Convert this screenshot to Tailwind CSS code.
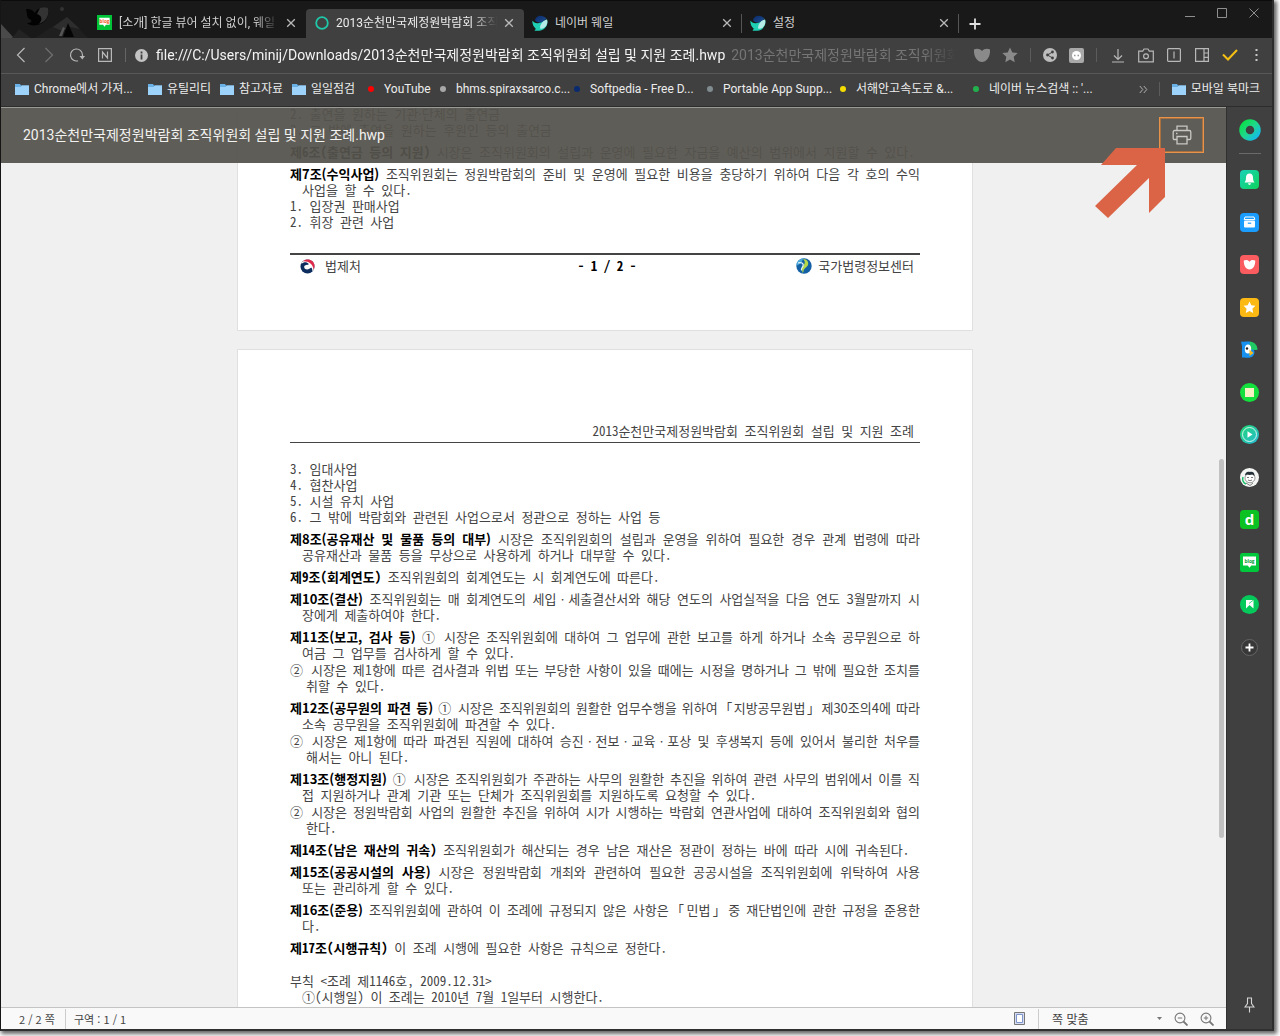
<!DOCTYPE html>
<html lang="ko">
<head>
<meta charset="utf-8">
<meta name="viewport" content="width=device-width, initial-scale=1">
<title>2013순천만국제정원박람회 조직위원회 설립 및 지원 조례.hwp</title>
<script src="https://cdn.jsdelivr.net/npm/@tailwindcss/browser@4"></script>
</head>
<body class="h-screen overflow-hidden bg-white pr-[6px] pb-[5px] font-['Roboto','Noto_Sans_CJK_KR',sans-serif]">
<svg class="absolute size-0">
  <defs>
    <linearGradient id="whaleTop" x1="0" y1="0" x2="1" y2="1"><stop offset="0" stop-color="#0b2a6b"/><stop offset="1" stop-color="#1d4f8e"/></linearGradient>
    <linearGradient id="ringGrad" x1="0" y1="0" x2="1" y2="1"><stop offset="0" stop-color="#0be04a"/><stop offset=".5" stop-color="#1fd88c"/><stop offset="1" stop-color="#14b9ee"/></linearGradient>
    <linearGradient id="bellGrad" x1="0" y1="0" x2="1" y2="1"><stop offset="0" stop-color="#18d0b8"/><stop offset="1" stop-color="#10d45c"/></linearGradient>
    <linearGradient id="playGrad" x1="0" y1="0" x2="1" y2="1"><stop offset="0" stop-color="#20d870"/><stop offset="1" stop-color="#28b8d8"/></linearGradient>
    <symbol id="folder" viewBox="0 0 14 12"><path d="M0 1h5l1 1.500h8V12H0z" fill="#69b1e6"/><path d="M0 4h5.500L7 2.500h7V12H0z" fill="#9dd2fa"/></symbol>
    <symbol id="close" viewBox="0 0 10 10"><path d="M1.200 1.200l7.600 7.600M8.800 1.200L1.200 8.800" stroke="#b9b9b9" stroke-width="1.300" fill="none"/></symbol>
    <symbol id="whale" viewBox="0 0 16 16"><path d="M.5 5.500C2 8 4 8.500 7 8l8-3.500c1.500 5-1.500 11-8 11.300H2.500l1.300-2C1.500 12 0 9 .5 5.500z" fill="#1fd0b4"/><path d="M3 5C4 .5 10-1 14.500 3.500 13.500 5 10 8 7.500 7.600 5 7.500 3.500 6.500 3 5z" fill="url(#whaleTop)"/><path d="M8 13.500c0-4.500 3-8 7-9 1.500 5-2 10-7 9z" fill="#b5ebe6"/></symbol>
    <symbol id="blog" viewBox="0 0 16 16"><path d="M2.500 3h11v7.500h-4L8 12.500l-1.500-2h-4z" fill="#fff"/></symbol>
  </defs>
</svg>

<div class="flex h-full flex-col border-l border-[#151515] border-r-2 border-b-2 border-b-[#303030] border-r-[#2c2c2c] bg-[#404040] shadow-[2px_2px_4px_1px_rgba(0,0,0,0.6)]">

  <!-- Tab strip -->
  <header class="flex h-[38px] shrink-0 border-t border-[#0c0c0c] bg-[#191919]">
    <svg class="h-[37px] w-[87px] shrink-0" viewBox="0 0 87 37">
      <path d="M0 23l13 14H0z" fill="#4a4a4a"/><path d="M11 37l7-9 8 6 4 3z" fill="#232323"/><path d="M34 37l32-21 21 21z" fill="#1f1f1f"/><path d="M52 26l14-10 13 12-10-2-8 4z" fill="#2d2d2d"/><path d="M62 36l5-14 6 14z" fill="#050505"/><path d="M58 35l4-9 2 1-3 8z" fill="#555"/>
      <path d="M25 8c6 0 7 2 9 4 2-5 7-6 13-5 2 8-3 16-11 17-4 1-8 0-10-2 4 0 5-1 4-3-3-1-4-3-4-6z" fill="#030303"/><path d="M39 7c3-1 6-1 8 0 2 8-3 14-9 16 4-5 3-8-2-10z" fill="#333"/><circle cx="61" cy="8" r="2" fill="#333"/>
    </svg>
    <nav class="flex min-w-0 shrink" aria-label="탭">
      <div class="flex w-[218px] items-center gap-[7px] pr-[10px] pl-[9px] pt-[6px]">
        <svg class="size-[15px] shrink-0 bg-[#00c437]" viewBox="0 0 16 16"><use href="#blog"/><text x="8" y="8.500" text-anchor="middle" font-size="5" font-weight="bold" font-family="Open Sans" fill="#f16023">blog</text></svg>
        <a href="#" class="flex-1 overflow-hidden text-[12px] leading-4 whitespace-nowrap text-[#d0d0d0] [mask-image:linear-gradient(to_right,black_85%,transparent)]">[소개] 한글 뷰어 설치 없이, 웨일</a>
        <button aria-label="탭 닫기"><svg class="size-[10px]"><use href="#close"/></svg></button>
      </div>
      <div class="mt-2 flex w-[218px] items-center gap-[7px] rounded-t-sm bg-[#404040] pr-[10px] pl-[9px] pb-[2px]">
        <svg class="size-[14px] shrink-0" viewBox="0 0 14 14"><circle cx="7" cy="7" r="5.800" fill="none" stroke="#1fc8a9" stroke-width="1.800"/></svg>
        <a href="#" class="flex-1 overflow-hidden text-[12px] leading-4 whitespace-nowrap text-[#ececec] [mask-image:linear-gradient(to_right,black_85%,transparent)]">2013순천만국제정원박람회 조직</a>
        <button aria-label="탭 닫기"><svg class="size-[10px]"><use href="#close"/></svg></button>
      </div>
      <div class="flex w-[217px] items-center gap-[7px] pr-[9px] pl-2 pt-[6px]">
        <svg class="size-4 shrink-0"><use href="#whale"/></svg>
        <a href="#" class="flex-1 text-[12px] leading-4 text-[#d0d0d0]">네이버 웨일</a>
        <button aria-label="탭 닫기"><svg class="size-[10px]"><use href="#close"/></svg></button>
      </div>
      <div class="mt-[13px] mb-[5px] flex w-[218px] items-center gap-[7px] border-x border-[#555] pr-[9px] pl-2 pb-[2px]">
        <svg class="size-4 shrink-0"><use href="#whale"/></svg>
        <a href="#" class="flex-1 text-[12px] leading-4 text-[#d0d0d0]">설정</a>
        <button aria-label="탭 닫기"><svg class="size-[10px]"><use href="#close"/></svg></button>
      </div>
      <button class="flex w-8 items-center justify-center pt-[9px]" aria-label="새 탭"><svg class="size-3" viewBox="0 0 12 12"><path d="M6 .5v11M.5 6h11" stroke="#e0e0e0" stroke-width="1.800"/></svg></button>
    </nav>
    <div class="ml-auto flex items-start gap-[22px] pt-[7px] pr-[13px] text-[#8f8f8f]">
      <button aria-label="최소화"><svg class="size-[10px]" viewBox="0 0 10 10"><path d="M0 8.500h10" stroke="currentColor"/></svg></button>
      <button aria-label="최대화"><svg class="size-[10px]" viewBox="0 0 10 10"><path d="M.5.5h9v9h-9z" fill="none" stroke="currentColor"/></svg></button>
      <button aria-label="닫기"><svg class="size-[10px]" viewBox="0 0 10 10"><path d="M.5.5l9 9M9.500.5l-9 9" stroke="currentColor"/></svg></button>
    </div>
  </header>

  <!-- Address bar -->
  <div class="flex h-9 shrink-0 items-center border-b border-[#585858] pb-px pl-[6px] text-[#b8b8b8]">
    <button class="flex w-7 justify-center" aria-label="뒤로"><svg class="h-4 w-3" viewBox="0 0 12 16"><path d="M9.500 1L2.500 8l7 7" fill="none" stroke="currentColor" stroke-width="1.200"/></svg></button>
    <button class="flex w-7 justify-center text-[#707070]" aria-label="앞으로"><svg class="h-4 w-3" viewBox="0 0 12 16"><path d="M2.500 1l7 7-7 7" fill="none" stroke="currentColor" stroke-width="1.200"/></svg></button>
    <button class="flex w-7 justify-center" aria-label="새로고침"><svg class="size-4" viewBox="0 0 16 16"><path d="M9 13.800A6 6 0 1 1 13.500 8v2" fill="none" stroke="currentColor" stroke-width="1.200"/><path d="M10.500 9h5.500l-2.700 3.500z" fill="currentColor"/></svg></button>
    <button class="flex w-7 justify-center" aria-label="네이버"><svg class="size-[14px]" viewBox="0 0 14 14"><path d="M.6.6h12.800v12.800H.6zM4.500 10.500V4l5 6V3.500" fill="none" stroke="currentColor" stroke-width="1.200"/></svg></button>
    <span class="mx-[6px] h-[14px] w-px bg-[#666]"></span>
    <svg class="mx-[3px] size-[13px] shrink-0" viewBox="0 0 13 13"><circle cx="6.500" cy="6.500" r="6.500" fill="#c4c4c4"/><path d="M6.500 2.600v1.900M6.500 5.500v5" stroke="#404040" stroke-width="1.800"/></svg>
    <div class="ml-[5px] flex min-w-0 flex-1 gap-[6px] overflow-hidden whitespace-nowrap text-[14px] leading-5 [mask-image:linear-gradient(to_right,black_96%,transparent)]">
      <span class="text-[#f4f4f4]">file:///C:/Users/minij/Downloads/2013순천만국제정원박람회 조직위원회 설립 및 지원 조례.hwp</span>
      <span class="text-[#757575]">2013순천만국제정원박람회 조직위원회 설</span>
    </div>
    <div class="flex shrink-0 items-center pr-1 pl-3">
      <button class="flex w-7 justify-center" aria-label="관심"><svg class="h-[14px] w-4" viewBox="0 0 16 14"><path d="M0 1.500C3 0 6 .8 8 3c2-2.200 5-3 8-1.500C16.500 8 13 14 8 14S-.5 8 0 1.500z" fill="#8a8a8a"/></svg></button>
      <button class="flex w-7 justify-center" aria-label="북마크"><svg class="size-4" viewBox="0 0 16 16"><path d="M8 .5l2.300 4.900 5.400.7-4 3.700 1 5.400L8 12.600l-4.700 2.600 1-5.400-4-3.700 5.400-.7z" fill="#8a8a8a"/></svg></button>
      <span class="mx-[6px] h-[14px] w-px bg-[#5c5c5c]"></span>
      <button class="flex w-[26px] justify-center" aria-label="공유"><svg class="size-[14px]" viewBox="0 0 14 14"><circle cx="7" cy="7" r="7" fill="#bdbdbd"/><path d="M9.500 4L4.500 7l5 3" fill="none" stroke="#404040"/><g fill="#404040"><circle cx="9.500" cy="4" r="1.400"/><circle cx="4.500" cy="7" r="1.400"/><circle cx="9.500" cy="10" r="1.400"/></g></svg></button>
      <button class="flex w-[26px] justify-center" aria-label="확장"><svg class="size-[15px]" viewBox="0 0 15 15"><rect width="15" height="15" rx="2" fill="#a9a9a9"/><circle cx="7.500" cy="7.500" r="4.500" fill="#fff"/><path d="M5 7.500h1.500M8.500 7.500H10" stroke="#999" stroke-width="1.500"/></svg></button>
      <span class="mx-[7px] h-[14px] w-px bg-[#5c5c5c]"></span>
      <button class="flex w-7 justify-center" aria-label="다운로드"><svg class="h-[15px] w-[14px]" viewBox="0 0 14 15"><path d="M7 1v10M3 7.500L7 11.500l4-4M1 14h12" fill="none" stroke="currentColor" stroke-width="1.200"/></svg></button>
      <button class="flex w-7 justify-center" aria-label="캡처"><svg class="h-[15px] w-4" viewBox="0 0 16 15"><path d="M.7 3.200h4L6 1h4l1.300 2.200h4v10.600H.7z" fill="none" stroke="currentColor" stroke-width="1.200"/><circle cx="8" cy="8.200" r="2.400" fill="none" stroke="currentColor" stroke-width="1.200"/></svg></button>
      <button class="flex w-7 justify-center" aria-label="새 창"><svg class="size-[14px]" viewBox="0 0 14 14"><rect x=".6" y=".6" width="12.800" height="12.800" rx="1" fill="none" stroke="currentColor" stroke-width="1.200"/><path d="M7 3.500v7" stroke="currentColor" stroke-width="1.200"/></svg></button>
      <button class="flex w-7 justify-center" aria-label="사이드바"><svg class="size-[14px]" viewBox="0 0 14 14"><path d="M.6.600h12.800v12.800H.6zM9 .6v12.800M9 5h4.400M9 9.300h4.400" fill="none" stroke="currentColor" stroke-width="1.200"/></svg></button>
      <button class="flex w-7 justify-center" aria-label="업데이트"><svg class="h-3 w-4" viewBox="0 0 16 12"><path d="M1 5.500l5 5 9-9.500" fill="none" stroke="#f5bf14" stroke-width="2"/></svg></button>
      <button class="flex w-6 justify-center" aria-label="메뉴"><svg class="h-3 w-[3px]" viewBox="0 0 3 12" fill="#c8c8c8"><rect x=".5" width="2" height="2"/><rect x=".5" y="5" width="2" height="2"/><rect x=".5" y="10" width="2" height="2"/></svg></button>
    </div>
  </div>

  <!-- Bookmarks bar -->
  <nav class="flex h-8 shrink-0 items-center pb-[2px] pl-[14px] text-[12px] leading-4 whitespace-nowrap text-[#ececec]" aria-label="북마크">
    <a href="#" class="flex w-[133px] items-center gap-[5px]"><svg class="h-3 w-[14px] shrink-0"><use href="#folder"/></svg>Chrome에서 가져...</a>
    <a href="#" class="flex w-[72px] items-center gap-[5px]"><svg class="h-3 w-[14px] shrink-0"><use href="#folder"/></svg>유틸리티</a>
    <a href="#" class="flex w-[72px] items-center gap-[5px]"><svg class="h-3 w-[14px] shrink-0"><use href="#folder"/></svg>참고자료</a>
    <a href="#" class="flex w-[72px] items-center gap-[5px]"><svg class="h-3 w-[14px] shrink-0"><use href="#folder"/></svg>일일점검</a>
    <a href="#" class="flex w-[72px] items-center gap-[10px] pl-1"><i class="size-[6px] shrink-0 rounded-full bg-[#f00]"></i>YouTube</a>
    <a href="#" class="flex w-[134px] items-center gap-[10px] pl-1"><i class="size-[6px] shrink-0 rounded-full bg-[#a8a8a8]"></i>bhms.spiraxsarco.c...</a>
    <a href="#" class="flex w-[133px] items-center gap-[10px] pl-1"><i class="size-[6px] shrink-0 rounded-full bg-[#0a2a70]"></i>Softpedia - Free D...</a>
    <a href="#" class="flex w-[133px] items-center gap-[10px] pl-1"><i class="size-[6px] shrink-0 rounded-full bg-[#808c90]"></i>Portable App Supp...</a>
    <a href="#" class="flex w-[133px] items-center gap-[10px] pl-1"><i class="size-[6px] shrink-0 rounded-full bg-[#f5dc00]"></i>서해안고속도로 &amp;...</a>
    <a href="#" class="flex w-[133px] items-center gap-[10px] pl-1"><i class="size-[6px] shrink-0 rounded-full bg-[#22b14c]"></i>네이버 뉴스검색 :: '...</a>
    <div class="ml-auto flex items-center pr-3">
      <button aria-label="더 보기"><svg class="size-[9px]" viewBox="0 0 9 9"><path d="M.8 1l3 3.500-3 3.500M4.800 1l3 3.500-3 3.500" fill="none" stroke="#b0b0b0"/></svg></button>
      <span class="mr-3 ml-[11px] h-[14px] w-px bg-[#5c5c5c]"></span>
      <a href="#" class="flex items-center gap-[5px]"><svg class="h-3 w-[14px]"><use href="#folder"/></svg>모바일 북마크</a>
    </div>
  </nav>

  <div class="flex min-h-0 flex-1 border-t border-[#2c2c2c]">
    <!-- Document viewer -->
    <div class="flex min-w-0 flex-1 flex-col">
      <main class="relative min-h-0 flex-1 overflow-hidden border-t border-[#9a9a96] bg-[#f0f0f0] pr-[17px] font-['Noto_Sans_Mono_CJK_KR','Noto_Sans_CJK_KR',sans-serif] text-[13px] leading-4 text-[#444]">
        <section class="mx-auto -mt-[2px] h-[225px] w-[736px] border-x border-b border-[#e0e0e0] bg-white px-[52px]">
          <p>2. 출연을 원하는 기관·단체의 출연금</p>
          <p>3. 그 밖에 출연을 원하는 후원인 등의 출연금</p>
          <p class="mt-[6px]"><b class="font-bold text-black">제6조(출연금 등의 지원)</b> 시장은 조직위원회의 설립과 운영에 필요한 자금을 예산의 범위에서 지원할 수 있다.</p>
          <p class="mt-[6px]"><span class="block font-['Noto_Sans_CJK_KR',sans-serif] [text-align-last:justify]"><b class="font-bold text-black">제7조(수익사업)</b> 조직위원회는 정원박람회의 준비 및 운영에 필요한 비용을 충당하기 위하여 다음 각 호의 수익</span><span class="block pl-3">사업을 할 수 있다.</span></p>
          <p>1. 입장권 판매사업</p>
          <p>2. 휘장 관련 사업</p>
          <footer class="mt-[23px] flex items-center justify-between border-t-2 border-[#444] pt-[3px] pr-[6px] pl-[10px]">
            <span class="flex w-[120px] items-center gap-[10px]"><svg class="size-[15px]" viewBox="0 0 16 16"><circle cx="8" cy="8" r="7.500" fill="#0d2d5e"/><path d="M2 3.500C5-.5 13-.5 15 6c.8 3-.5 6-2 7.500.5-2 0-3.500-1-4.500L10 10.500C7 12 4 10.500 4.500 8 5 6 8 6.500 9.500 5.500 7 2.500 4 3 1.500 5z" fill="#fff"/><path d="M3 2.500C7-1 14 .5 15.300 6c.4 2 0 4-1 5.500C14.500 6 9 2 3 2.500z" fill="#e0284a"/></svg>법제처</span>
            <b class="font-bold text-black">- 1 / 2 -</b>
            <span class="flex w-[120px] items-center justify-end gap-[6px] whitespace-nowrap"><svg class="size-4 shrink-0" viewBox="0 0 16 16"><circle cx="8" cy="8" r="7.700" fill="#1460a4"/><path d="M8 .3C3 .5.3 4 .4 8c2-2 4-1.500 5-3.500C6.500 3 6 2 8 .3z" fill="#4aa8d8"/><path d="M7 1c4 0 6 3 5 6-1 2.500-4 3-4.500 6 0 1-.5 1.500-1 2 0-4-1.500-5 1-7.500C9.500 5 9 3 7 1z" fill="#b4d84a"/><path d="M2 5c3-1 6 0 5 3-.5 1.500-2 2-1.500 4.500" fill="none" stroke="#e8f4fa" stroke-width="1.200"/></svg>국가법령정보센터</span>
          </footer>
        </section>

        <section class="mx-auto mt-[18px] w-[736px] border border-[#e0e0e0] bg-white px-[52px] pt-[73px] pb-[60px]">
          <h2 class="mb-[18px] border-b border-[#444] pr-[6px] pb-[3px] text-right">2013순천만국제정원박람회 조직위원회 설립 및 지원 조례</h2>
          <p>3. 임대사업</p>
          <p>4. 협찬사업</p>
          <p>5. 시설 유치 사업</p>
          <p>6. 그 밖에 박람회와 관련된 사업으로서 정관으로 정하는 사업 등</p>
          <p class="mt-[6px]"><span class="block font-['Noto_Sans_CJK_KR',sans-serif] [text-align-last:justify]"><b class="font-bold text-black">제8조(공유재산 및 물품 등의 대부)</b> 시장은 조직위원회의 설립과 운영을 위하여 필요한 경우 관계 법령에 따라</span><span class="block pl-3">공유재산과 물품 등을 무상으로 사용하게 하거나 대부할 수 있다.</span></p>
          <p class="mt-[6px]"><b class="font-bold text-black">제9조(회계연도)</b> 조직위원회의 회계연도는 시 회계연도에 따른다.</p>
          <p class="mt-[6px]"><span class="block font-['Noto_Sans_CJK_KR',sans-serif] [text-align-last:justify]"><b class="font-bold text-black">제10조(결산)</b> 조직위원회는 매 회계연도의 세입ㆍ세출결산서와 해당 연도의 사업실적을 다음 연도 3월말까지 시</span><span class="block pl-3">장에게 제출하여야 한다.</span></p>
          <p class="mt-[6px]"><span class="block font-['Noto_Sans_CJK_KR',sans-serif] [text-align-last:justify]"><b class="font-bold text-black">제11조(보고, 검사 등)</b> ① 시장은 조직위원회에 대하여 그 업무에 관한 보고를 하게 하거나 소속 공무원으로 하</span><span class="block pl-3">여금 그 업무를 검사하게 할 수 있다.</span></p>
          <p class="mt-px"><span class="block font-['Noto_Sans_CJK_KR',sans-serif] [text-align-last:justify]">② 시장은 제1항에 따른 검사결과 위법 또는 부당한 사항이 있을 때에는 시정을 명하거나 그 밖에 필요한 조치를</span><span class="block pl-4">취할 수 있다.</span></p>
          <p class="mt-[6px]"><span class="block font-['Noto_Sans_CJK_KR',sans-serif] [text-align-last:justify]"><b class="font-bold text-black">제12조(공무원의 파견 등)</b> ① 시장은 조직위원회의 원활한 업무수행을 위하여「지방공무원법」제30조의4에 따라</span><span class="block pl-3">소속 공무원을 조직위원회에 파견할 수 있다.</span></p>
          <p class="mt-px"><span class="block font-['Noto_Sans_CJK_KR',sans-serif] [text-align-last:justify]">② 시장은 제1항에 따라 파견된 직원에 대하여 승진ㆍ전보ㆍ교육ㆍ포상 및 후생복지 등에 있어서 불리한 처우를</span><span class="block pl-4">해서는 아니 된다.</span></p>
          <p class="mt-[6px]"><span class="block font-['Noto_Sans_CJK_KR',sans-serif] [text-align-last:justify]"><b class="font-bold text-black">제13조(행정지원)</b> ① 시장은 조직위원회가 주관하는 사무의 원활한 추진을 위하여 관련 사무의 범위에서 이를 직</span><span class="block pl-3">접 지원하거나 관계 기관 또는 단체가 조직위원회를 지원하도록 요청할 수 있다.</span></p>
          <p class="mt-px"><span class="block font-['Noto_Sans_CJK_KR',sans-serif] [text-align-last:justify]">② 시장은 정원박람회 사업의 원활한 추진을 위하여 시가 시행하는 박람회 연관사업에 대하여 조직위원회와 협의</span><span class="block pl-4">한다.</span></p>
          <p class="mt-[6px]"><b class="font-bold text-black">제14조(남은 재산의 귀속)</b> 조직위원회가 해산되는 경우 남은 재산은 정관이 정하는 바에 따라 시에 귀속된다.</p>
          <p class="mt-[6px]"><span class="block font-['Noto_Sans_CJK_KR',sans-serif] [text-align-last:justify]"><b class="font-bold text-black">제15조(공공시설의 사용)</b> 시장은 정원박람회 개최와 관련하여 필요한 공공시설을 조직위원회에 위탁하여 사용</span><span class="block pl-3">또는 관리하게 할 수 있다.</span></p>
          <p class="mt-[6px]"><span class="block font-['Noto_Sans_CJK_KR',sans-serif] [text-align-last:justify]"><b class="font-bold text-black">제16조(준용)</b> 조직위원회에 관하여 이 조례에 규정되지 않은 사항은「민법」중 재단법인에 관한 규정을 준용한</span><span class="block pl-3">다.</span></p>
          <p class="mt-[6px]"><b class="font-bold text-black">제17조(시행규칙)</b> 이 조례 시행에 필요한 사항은 규칙으로 정한다.</p>
          <p class="mt-[17px]">부칙 &lt;조례 제1146호, 2009.12.31&gt;</p>
          <p class="pl-3">①(시행일) 이 조례는 2010년 7월 1일부터 시행한다.</p>
        </section>

        <!-- Floating title bar -->
        <div class="absolute inset-x-0 top-0 flex h-[55px] items-center justify-between bg-[#55534d]/94 px-[22px] pb-[2px] font-['Roboto','Noto_Sans_CJK_KR',sans-serif]">
          <h1 class="text-[14px] leading-4 text-[#f2f2f0]">2013순천만국제정원박람회 조직위원회 설립 및 지원 조례.hwp</h1>
          <button class="flex h-9 w-[45px] items-center justify-center border border-[#e8924a] outline -outline-offset-2 outline-[#a9713f]" aria-label="인쇄"><svg class="size-5" viewBox="0 0 20 20"><path d="M5 5.500V1.200h10v4.300M5 14.500H2.500q-1.300 0-1.300-1.300V7q0-1.500 1.500-1.500h14.600q1.500 0 1.500 1.500v6.200q0 1.300-1.300 1.300H15M5 11.500h10v7.300H5zM4 8.500h1.500" fill="none" stroke="#c9c8c5" stroke-width="1.300"/></svg></button>
        </div>
        <svg class="absolute top-10 right-[61px] h-[70px] w-[70px]" viewBox="0 0 70 70"><path d="M21 0H70V49L54 65V30L13 70L0 58L42 17H6z" fill="#da6445"/></svg>
        <div class="absolute top-[351px] right-[2px] h-[379px] w-[5px] rounded-full bg-[#c1c1c1]"></div>
      </main>

      <!-- Status bar -->
      <footer class="flex h-[22px] shrink-0 items-center border-t border-[#c4c4c4] bg-[#f9f9f9] pr-3 pl-[18px] font-['Noto_Sans_CJK_KR',sans-serif] text-[11px] leading-4 whitespace-pre text-[#444]">
        <span class="w-[46px]">2 / 2 쪽</span>
        <span class="border-l border-[#ccc] py-[2px] pl-2">구역 : 1 / 1</span>
        <div class="ml-auto flex items-center">
          <button aria-label="쪽 윤곽"><svg class="h-[13px] w-[11px]" viewBox="0 0 11 13"><path d="M.5.5h10v12H.5z" fill="#d5dcf2" stroke="#777"/><path d="M2.500 2.500h6v8h-6z" fill="#fff" stroke="#7c93cc"/></svg></button>
          <label class="ml-[13px] flex items-center border-l border-[#ccc] py-[2px] pl-[13px]"><span class="sr-only">배율</span><select class="w-[105px] appearance-none bg-transparent text-[12px] leading-4"><option>쪽 맞춤</option></select><svg class="h-[3px] w-[5px]" viewBox="0 0 5 3"><path d="M0 0h5L2.500 3z" fill="#777"/></svg></label>
          <button class="ml-3" aria-label="축소"><svg class="size-[14px]" viewBox="0 0 14 14"><circle cx="6" cy="6" r="4.900" fill="none" stroke="#777" stroke-width="1.100"/><path d="M9.500 9.500l4 4" stroke="#777" stroke-width="1.800"/><path d="M3.800 6h4.400" stroke="#777"/></svg></button>
          <button class="ml-3" aria-label="확대"><svg class="size-[14px]" viewBox="0 0 14 14"><circle cx="6" cy="6" r="4.900" fill="none" stroke="#777" stroke-width="1.100"/><path d="M9.500 9.500l4 4" stroke="#777" stroke-width="1.800"/><path d="M3.800 6h4.400M6 3.800v4.400" stroke="#777"/></svg></button>
        </div>
      </footer>
    </div>

    <!-- Sidebar -->
    <aside class="flex w-[46px] shrink-0 flex-col items-center border-l border-[#303030] pt-3 pb-4">
      <button aria-label="웨일"><svg class="size-[22px]" viewBox="0 0 22 22"><circle cx="11" cy="11" r="7.500" fill="none" stroke="url(#ringGrad)" stroke-width="6.500"/></svg></button>
      <hr class="mt-3 w-[22px] border-[#6a6a6a]">
      <div class="mt-4 flex h-[487px] shrink-0 flex-col justify-between">
        <button aria-label="알림"><svg class="size-[19px]" viewBox="0 0 19 19"><rect width="19" height="19" rx="4" fill="url(#bellGrad)"/><path d="M9.500 3.500c-2.500 0-3.500 2-3.500 4 0 3-.5 3.500-1.500 5h10c-1-1.500-1.500-2-1.500-5 0-2-1-4-3.500-4zM8 13.300h3q-.3 1.700-1.500 1.700T8 13.300z" fill="#fff"/></svg></button>
        <button aria-label="보관함"><svg class="size-[19px]" viewBox="0 0 19 19"><rect width="19" height="19" rx="4" fill="#1a9dff"/><path d="M5 4h9l.8 2.500H4.200z" fill="none" stroke="#fff"/><rect x="4" y="7.500" width="11" height="7" rx="1" fill="#fff"/><path d="M7.800 10.200h3.400" stroke="#1a9dff" stroke-width="1.200"/></svg></button>
        <button aria-label="관심"><svg class="size-[19px]" viewBox="0 0 19 19"><rect width="19" height="19" rx="4" fill="#fb5c60"/><path d="M3.800 5.500c2.500-1 4.400-.5 5.700 1.300 1.300-1.800 3.200-2.300 5.700-1.300C15.500 10.500 13 14.500 9.500 14.500S3.500 10.500 3.800 5.500z" fill="#fff"/></svg></button>
        <button aria-label="북마크"><svg class="size-[19px]" viewBox="0 0 19 19"><rect width="19" height="19" rx="4" fill="#fdb913"/><path d="M9.500 3.500l1.800 3.800 4.100.5-3 2.900.8 4.200-3.700-2-3.700 2 .8-4.200-3-2.900 4.100-.5z" fill="#fff"/></svg></button>
        <button aria-label="파파고"><svg class="size-[19px]" viewBox="0 0 19 19"><path d="M1 1.500c2 .8 3 0 5 0h4v16H2V6z" fill="#1790f0"/><path d="M10 1.500A8 8 0 0 1 17.500 9q0 1-1 1H9z" fill="#1fcb62"/><path d="M9 9.500h4.500a5 5 0 0 1-4 8H5z" fill="#1790f0"/><ellipse cx="8" cy="9" rx="3.200" ry="4.500" fill="#fff"/><circle cx="7" cy="8.500" r="1.200" fill="#222"/><path d="M9.500 9.500l4 3.500-4 3z" fill="#fbbd17"/></svg></button>
        <button aria-label="메모"><svg class="size-[19px]" viewBox="0 0 19 19"><circle cx="9.500" cy="9.500" r="9.500" fill="#13e03c"/><rect x="5" y="5" width="9" height="9" fill="#f6f0c4"/></svg></button>
        <button aria-label="뮤직"><svg class="size-[19px]" viewBox="0 0 19 19"><circle cx="9.500" cy="9.500" r="9.500" fill="url(#playGrad)"/><circle cx="9.500" cy="9.500" r="7" fill="none" stroke="#d5f5ee"/><path d="M7.500 6.200l5 3.300-5 3.300z" fill="#fff"/></svg></button>
        <button aria-label="웹툰"><svg class="size-[19px]" viewBox="0 0 19 19"><circle cx="9.500" cy="9.500" r="9.500" fill="#f4f6f4"/><path d="M3 9a6.500 6 0 0 0 3 7" fill="none" stroke="#1bbf6b" stroke-width="1.500"/><ellipse cx="10" cy="10" rx="5" ry="4.800" fill="#fff" stroke="#555" stroke-width=".6"/><path d="M5 7.500c0-3.500 3-4.500 5-3.500C12 3 15 4.500 14.500 8l-2-1.500-3 .5-2.500-.5z" fill="#243038"/><path d="M7 9.500h2M11 9.500h2M8 12q2 1.500 4 0M6 15l4 2.500 3-2.500" fill="none" stroke="#444" stroke-width=".7"/></svg></button>
        <button aria-label="사전" class="flex size-[19px] items-center justify-center rounded-sm bg-[#0cc223] font-['Open_Sans',sans-serif] text-[15px] leading-4 font-bold text-white"><span class="pb-px">d</span></button>
        <button aria-label="블로그"><svg class="size-[19px]" viewBox="0 0 16 16"><rect width="16" height="16" rx="2" fill="#00c73c"/><use href="#blog"/><text x="8" y="8.300" text-anchor="middle" font-size="4" font-weight="bold" font-family="Open Sans" fill="#00a030">blog</text></svg></button>
        <button aria-label="뉴스"><svg class="size-[19px]" viewBox="0 0 19 19"><circle cx="9.500" cy="9.500" r="9.500" fill="#06c95c"/><path d="M6 5h7.500v8.500L9.500 10 6 13.500z" fill="#fff"/><path d="M9 8.500L13.500 5" stroke="#06c95c" stroke-width=".8"/></svg></button>
        <button aria-label="추가"><svg class="size-[19px]" viewBox="0 0 19 19"><circle cx="9.500" cy="9.500" r="8" fill="#383838" stroke="#666"/><path d="M9.500 5.500v8M5.500 9.500h8" stroke="#fff" stroke-width="1.800"/></svg></button>
      </div>
      <button class="mt-auto text-[#d5d5d5]" aria-label="고정"><svg class="h-4 w-[11px]" viewBox="0 0 11 16"><path d="M3 1h5M3.500 1v5.500L1 10h9L7.500 6.500V1M5.500 10v5.500" fill="none" stroke="currentColor" stroke-width="1.100"/></svg></button>
    </aside>
  </div>
</div>
</body>
</html>
